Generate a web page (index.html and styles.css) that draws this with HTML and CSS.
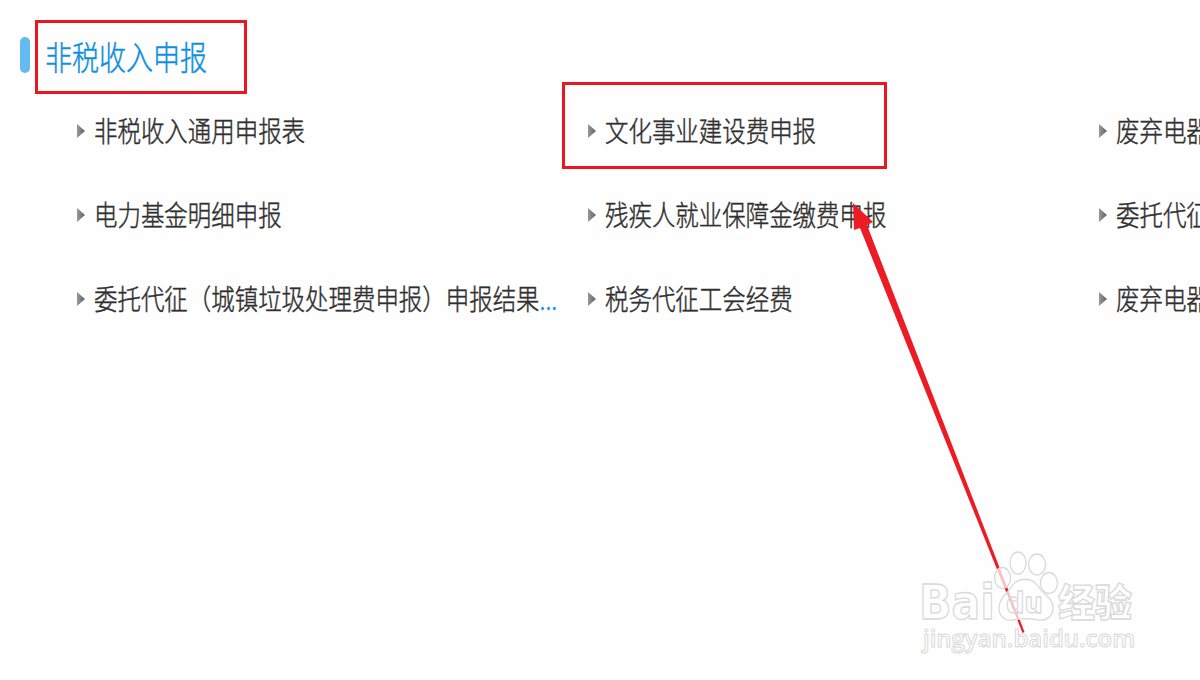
FILE: index.html
```html
<!DOCTYPE html>
<html lang="zh-CN">
<head>
<meta charset="utf-8">
<title>非税收入申报</title>
<link rel="stylesheet" href="styles.css">
</head>
<body>
<main class="page">
  <header class="heading">
    <span class="bar"></span>
    <h1 class="title-box"><span class="title">非税收入申报</span></h1>
  </header>
  <ul class="links">
    <li class="item"><i class="caret"></i><span class="label">非税收入通用申报表</span></li>
    <li class="item marked"><i class="caret"></i><span class="label">文化事业建设费申报</span></li>
    <li class="item"><i class="caret"></i><span class="label">废弃电器</span></li>
    <li class="item"><i class="caret"></i><span class="label">电力基金明细申报</span></li>
    <li class="item"><i class="caret"></i><span class="label">残疾人就业保障金缴费申报</span></li>
    <li class="item"><i class="caret"></i><span class="label">委托代征</span></li>
    <li class="item"><i class="caret"></i><span class="label">委托代征（城镇垃圾处理费申报）申报结果<span class="more">...</span></span></li>
    <li class="item"><i class="caret"></i><span class="label">税务代征工会经费</span></li>
    <li class="item"><i class="caret"></i><span class="label">废弃电器</span></li>
  </ul>
  <svg class="overlay" viewBox="0 0 1200 680">
    <path class="arrow" d="M853 203 L873 222 L867 225 L1024.500 632 L1022.500 633 L860 228 L854 230 Z"/>
    <g class="watermark">
      <ellipse cx="1002.500" cy="578" rx="8" ry="10.500"/>
      <ellipse cx="1018" cy="563" rx="8" ry="11"/>
      <ellipse cx="1037" cy="564.500" rx="8.500" ry="10.500"/>
      <ellipse cx="1049" cy="583" rx="8.500" ry="10.500"/>
      <path d="M1012 586 C1018 577 1032 577 1038 586 C1043 594 1053 598 1053 608 C1053 616 1047 621 1038 620 C1029 618 1022 618 1014 620 C1005 622 999 616 999 608 C999 598 1007 594 1012 586Z"/>
      <text class="latin" x="919" y="619" font-size="48" textLength="76" lengthAdjust="spacingAndGlyphs">Bai</text>
      <text class="latin du" x="1006" y="613" font-size="29" textLength="37" lengthAdjust="spacingAndGlyphs">du</text>
      <text class="cjk" x="1058" y="616" font-size="38" textLength="74" lengthAdjust="spacingAndGlyphs">经验</text>
      <text class="url" x="923" y="647" font-size="24" textLength="212" lengthAdjust="spacingAndGlyphs">jingyan.baidu.com</text>
    </g>
  </svg>
</main>
</body>
</html>
```
FILE: styles.css
```css
body {
  margin: 0;
  background: #fefefe;
  font-family: "Noto Sans CJK SC", sans-serif;
}
.page {
  position: relative;
  width: 1200px;
  height: 680px;
  overflow: hidden;
}
.heading {
  display: flex;
  align-items: flex-start;
  height: 69px;
  padding: 20px 0 0 20px;
}
.bar {
  width: 10px;
  height: 36px;
  margin: 17px 5px 0 0;
  border-radius: 5px;
  background: #63bbf0;
}
.title-box {
  box-sizing: border-box;
  width: 212px;
  height: 74px;
  margin: 0;
  padding-left: 7px;
  border: 3px solid #ec1620;
  font-weight: 300;
  line-height: 66px;
}
.title {
  display: inline-block;
  color: #0d8fe0;
  font-size: 33px;
  white-space: nowrap;
  -webkit-text-stroke: .45px;
  transform: scaleX(.818);
  transform-origin: 0 50%;
}
.links {
  display: grid;
  grid-template-columns: repeat(3, 511px);
  grid-auto-rows: 84px;
  margin: 0;
  padding: 0 0 0 77px;
  list-style: none;
}
.item {
  position: relative;
  display: flex;
  align-items: center;
  min-width: 0;
}
.caret {
  flex: none;
  width: 8px;
  height: 14px;
  margin-right: 9px;
  background: linear-gradient(90deg, #999, #606060);
  clip-path: polygon(0 0, 100% 50%, 0 100%);
}
.label {
  flex: none;
  margin-bottom: 2px;
  color: #303030;
  font-size: 28px;
  font-weight: 300;
  line-height: 40px;
  white-space: nowrap;
  -webkit-text-stroke: .45px;
  transform: scaleX(.8375);
  transform-origin: 0 50%;
}
.more {
  color: #1791dc;
}
.marked::before {
  content: "";
  position: absolute;
  box-sizing: border-box;
  left: -26px;
  top: -7px;
  width: 325px;
  height: 87px;
  border: 3px solid #ec1620;
}
.overlay {
  position: absolute;
  inset: 0;
  width: 1200px;
  height: 680px;
}
.arrow {
  fill: #ec1b24;
}
.watermark {
  fill: rgba(255, 255, 255, .72);
  stroke: #d9d9d9;
  stroke-width: 1.3;
}
.latin {
  font-family: "DejaVu Sans", sans-serif;
  font-weight: 700;
}
.du {
  fill: none;
}
.cjk {
  font-family: "Noto Sans CJK SC", sans-serif;
  font-weight: 900;
}
.url {
  font-family: "Open Sans", sans-serif;
  font-weight: 600;
  stroke-width: 1;
}
```
